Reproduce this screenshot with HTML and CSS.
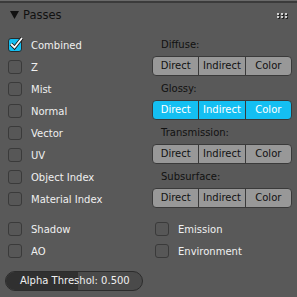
FILE: index.html
```html
<!DOCTYPE html>
<html lang="en">

<head>
    <meta charset="UTF-8" />
    <title>Passes</title>
    <link rel="stylesheet" href="styles.css">
</head>

<body>
    <div class="panel">
        <div class="header">
            <svg class="arrow" width="9" height="8" viewBox="0 0 9 8"><polygon points="0,0 9,0 4.5,8" fill="#111" /></svg>
            <span class="title">Passes</span>
            <svg class="grip" width="11" height="6" viewBox="0 0 11 6">
                <g fill="#222">
                    <rect x="1" y="1" width="2" height="2" /><rect x="5" y="1" width="2" height="2" /><rect x="9" y="1" width="2" height="2" />
                    <rect x="1" y="4" width="2" height="2" /><rect x="5" y="4" width="2" height="2" /><rect x="9" y="4" width="2" height="2" />
                </g>
                <g fill="#d0d0d0">
                    <rect x="0" y="0" width="2" height="2" /><rect x="4" y="0" width="2" height="2" /><rect x="8" y="0" width="2" height="2" />
                    <rect x="0" y="3" width="2" height="2" /><rect x="4" y="3" width="2" height="2" /><rect x="8" y="3" width="2" height="2" />
                </g>
            </svg>
        </div>

        <div class="columns">
            <div class="col-left">
                <div class="row"><span class="check on"><svg width="16" height="16" viewBox="0 0 16 16"><polyline points="3,8 6.5,11.5 14,2" fill="none" stroke="#1a1a1a" stroke-width="3.6" /><polyline points="3,8 6.5,11.5 14,2" fill="none" stroke="#fff" stroke-width="1.8" /></svg></span>Combined</div>
                <div class="row"><span class="check"></span>Z</div>
                <div class="row"><span class="check"></span>Mist</div>
                <div class="row"><span class="check"></span>Normal</div>
                <div class="row"><span class="check"></span>Vector</div>
                <div class="row"><span class="check"></span>UV</div>
                <div class="row"><span class="check"></span>Object Index</div>
                <div class="row"><span class="check"></span>Material Index</div>
            </div>
            <div class="col-right">
                <div class="label">Diffuse:</div>
                <div class="btns"><span>Direct</span><span>Indirect</span><span>Color</span></div>
                <div class="label">Glossy:</div>
                <div class="btns active"><span>Direct</span><span>Indirect</span><span>Color</span></div>
                <div class="label">Transmission:</div>
                <div class="btns"><span>Direct</span><span>Indirect</span><span>Color</span></div>
                <div class="label">Subsurface:</div>
                <div class="btns"><span>Direct</span><span>Indirect</span><span>Color</span></div>
            </div>
        </div>

        <div class="columns lower">
            <div class="col-left">
                <div class="row"><span class="check"></span>Shadow</div>
                <div class="row"><span class="check"></span>AO</div>
            </div>
            <div class="col-right alt">
                <div class="row"><span class="check"></span>Emission</div>
                <div class="row"><span class="check"></span>Environment</div>
            </div>
        </div>

        <div class="slider">
            <div class="fill" style="width: 53%"></div>
            <span class="slider-text">Alpha Threshol: 0.500</span>
        </div>
    </div>
</body>

</html>
```

FILE: styles.css
```css
body {
    margin: 0;
    background-color: #595959;
    font-family: "DejaVu Sans", sans-serif;
    font-size: 10px;
}

.panel {
    width: 297px;
    height: 297px;
    border-top: 1px solid #6a6a6a;
    box-sizing: border-box;
}

.header {
    display: flex;
    align-items: center;
    height: 33px;
    border-top: 2px solid #3b3b3b;
    padding: 0 9px 8px 10px;
    box-sizing: border-box;
}

.arrow {
    margin-right: 4px;
}

.title {
    color: #111;
    font-size: 11.5px;
    flex: 1;
}

.grip {
    margin-top: 2px;
}

.columns {
    display: flex;
}

.col-left {
    width: 150px;
    padding-left: 8px;
    box-sizing: border-box;
}

.col-right {
    width: 140px;
    padding-left: 2px;
}

.col-right.alt {
    padding-left: 5px;
}

.row {
    display: flex;
    align-items: center;
    height: 22px;
    color: #f0f0f0;
}

.check {
    position: relative;
    width: 12px;
    height: 12px;
    border: 1px solid #3a3a3a;
    border-radius: 3px;
    background: #575757;
    margin-right: 9px;
}

.check.on {
    background: #14bff2;
    border-color: #2a2a2a;
}

.check svg {
    position: absolute;
    left: -1px;
    top: -3px;
}

.label {
    height: 22px;
    line-height: 22px;
    padding-left: 9px;
    color: #111;
}

.btns {
    display: flex;
    height: 20px;
    margin-bottom: 2px;
    border: 1px solid #3a3a3a;
    border-radius: 4px;
    background: #989898;
    box-sizing: border-box;
    overflow: hidden;
}

.btns span {
    flex: 1;
    text-align: center;
    line-height: 18px;
    color: #111;
    border-left: 1px solid #3a3a3a;
}

.btns span:first-child {
    border-left: none;
}

.btns.active {
    background: #14bff2;
}

.btns.active span {
    color: #fff;
}

.lower {
    margin-top: 8px;
}

.slider {
    position: relative;
    margin: 9px 0 0 5px;
    width: 138px;
    height: 20px;
    border: 1px solid #2c2c2c;
    border-radius: 10px;
    background: #4a4a4a;
    box-sizing: border-box;
    overflow: hidden;
}

.fill {
    height: 100%;
    background: #303030;
}

.slider-text {
    position: absolute;
    left: 14px;
    top: 0;
    line-height: 18px;
    color: #f0f0f0;
}
```
